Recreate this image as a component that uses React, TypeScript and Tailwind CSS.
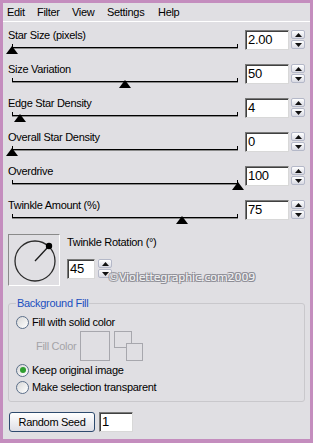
import React from 'react';

const sliders = [
  { label: 'Star Size (pixels)', value: '2.00', pos: 0 },
  { label: 'Size Variation', value: '50', pos: 113 },
  { label: 'Edge Star Density', value: '4', pos: 8 },
  { label: 'Overall Star Density', value: '0', pos: 0 },
  { label: 'Overdrive', value: '100', pos: 226 },
  { label: 'Twinkle Amount (%)', value: '75', pos: 170 },
];

const font = "font-['Liberation_Sans',Arial,sans-serif] text-[11px] tracking-[-0.3px]";

function Spinner() {
  return (
    <div className="flex flex-col w-[14px] h-[19px] mt-[2px] gap-[1px]">
      {[0, 1].map(i => (
        <div
          key={i}
          className="flex-1 flex items-center justify-center rounded-[2px] border border-[#b4b8c8] bg-gradient-to-b from-white to-[#d9dae3]"
        >
          <svg width="7" height="4" viewBox="0 0 7 4">
            {i === 0 ? <polygon points="3.5,0 7,4 0,4" fill="#111" /> : <polygon points="0,0 7,0 3.5,4" fill="#111" />}
          </svg>
        </div>
      ))}
    </div>
  );
}

function Field({ value, w }: { value: string; w: string }) {
  return (
    <div
      className={`${w} h-[20px] bg-white border border-t-[#7a7a7a] border-l-[#7a7a7a] border-r-[#d8d8d8] border-b-[#d8d8d8] shadow-[inset_1px_1px_0_#404040] pl-[2px] flex items-center font-['Liberation_Sans',Arial,sans-serif] text-[13px] text-black`}
    >
      {value}
    </div>
  );
}

function Radio({ checked }: { checked?: boolean }) {
  return (
    <div className="w-[13px] h-[13px] rounded-full border border-[#5c6f8a] bg-gradient-to-br from-[#d8d8d8] to-white flex items-center justify-center">
      {checked && <div className="w-[6px] h-[6px] rounded-full bg-[#2f9e2f]" />}
    </div>
  );
}

export default function App() {
  return (
    <div className={`w-[313px] h-[443px] bg-[#c48dbe] pt-[3px] px-[3px] pb-[4px] ${font} text-black`}>
      <div className="h-full bg-[#e0dfe3] flex flex-col">
        <div className="h-[19px] flex items-center pl-[4px] border-b border-white">
          <span className="w-[30px]">Edit</span>
          <span className="w-[35px]">Filter</span>
          <span className="w-[35px]">View</span>
          <span className="w-[51px]">Settings</span>
          <span>Help</span>
        </div>

        <div className="px-[5px] pt-[6px] flex flex-col">
          {sliders.map(s => (
            <div key={s.label} className="flex h-[34px]">
              <div className="w-[237px]">
                <div className="h-[14px] leading-[14px]">{s.label}</div>
                <div className="relative ml-[4px] w-[226px] h-[2px] mt-[5px] border-t border-black border-b border-b-[#8a8a8a]">
                  <div className="absolute left-0 top-[-4px] w-px h-[4px] bg-black" />
                  <div className="absolute right-0 top-[-4px] w-px h-[4px] bg-black" />
                  <svg
                    className="absolute top-[-2px]"
                    style={{ left: s.pos - 6 }}
                    width="12"
                    height="8"
                    viewBox="0 0 12 8"
                  >
                    <polygon points="6,0 12,8 0,8" fill="#000" />
                  </svg>
                </div>
              </div>
              <div className="flex gap-[2px]">
                <div className="mt-[2px]">
                  <Field value={s.value} w="w-[44px]" />
                </div>
                <Spinner />
              </div>
            </div>
          ))}

          <div className="relative flex mt-[2px] h-[52px]">
            <div className="w-[52px] h-[52px] border border-t-[#8a8a8a] border-l-[#8a8a8a] border-r-white border-b-white">
              <svg width="50" height="50" viewBox="0 0 50 50">
                <circle cx="26" cy="26" r="20" fill="none" stroke="#2b2b2b" strokeWidth="1.3" />
                <line x1="26" y1="26" x2="40" y2="11" stroke="#1a1a1a" strokeWidth="1.3" />
                <circle cx="40" cy="11" r="3.2" fill="#000" />
              </svg>
            </div>
            <div className="ml-[7px] flex flex-col">
              <div className="h-[14px] leading-[14px] mt-[1px]">Twinkle Rotation (°)</div>
              <div className="flex gap-[3px] mt-[10px]">
                <Field value="45" w="w-[28px]" />
                <div className="-mt-[2px]">
                  <Spinner />
                </div>
              </div>
            </div>
            <div className="absolute left-[100px] top-[36px] font-['DejaVu_Sans',Verdana,sans-serif] text-[11px] tracking-[-0.1px] text-[#f4f4f6] [text-shadow:1px_1px_0_#8d8d95,-1px_-1px_0_#8d8d95,1px_-1px_0_#8d8d95,-1px_1px_0_#8d8d95]">
              ©Violettegraphic.com2009
            </div>
          </div>

          <div className="relative mt-[17px] h-[99px] border border-[#c9c8cc] rounded-[3px] pl-[7px]">
            <div className="absolute left-[7px] top-[-8px] px-[1px] bg-[#e0dfe3] text-[#1b4fbf] leading-[14px]">
              Background Fill
            </div>
            <div className="flex items-center gap-[3px] h-[14px] mt-[11px]">
              <Radio />
              <span>Fill with solid color</span>
            </div>
            <div className="flex items-center h-[30px] mt-[2px] ml-[20px]">
              <span className="text-[#a4a3a8] w-[44px]">Fill Color</span>
              <div className="w-[30px] h-[30px] border border-[#a7a7ad]" />
              <div className="relative ml-[4px] w-[30px] h-[30px]">
                <div className="absolute left-0 top-0 w-[18px] h-[17px] border border-[#a7a7ad]" />
                <div className="absolute left-[12px] top-[12px] w-[17px] h-[18px] border border-[#a7a7ad] bg-[#e0dfe3]" />
              </div>
            </div>
            <div className="flex items-center gap-[3px] h-[14px] mt-[2px]">
              <Radio checked />
              <span>Keep original image</span>
            </div>
            <div className="flex items-center gap-[3px] h-[14px] mt-[3px]">
              <Radio />
              <span>Make selection transparent</span>
            </div>
          </div>

          <div className="flex gap-[4px] mt-[10px] ml-[1px]">
            <div className="w-[86px] h-[20px] rounded-[3px] border border-[#2d4a6e] bg-gradient-to-b from-white to-[#dedee6] flex items-center justify-center">
              Random Seed
            </div>
            <Field value="1" w="w-[34px]" />
          </div>
        </div>
      </div>
    </div>
  );
}
